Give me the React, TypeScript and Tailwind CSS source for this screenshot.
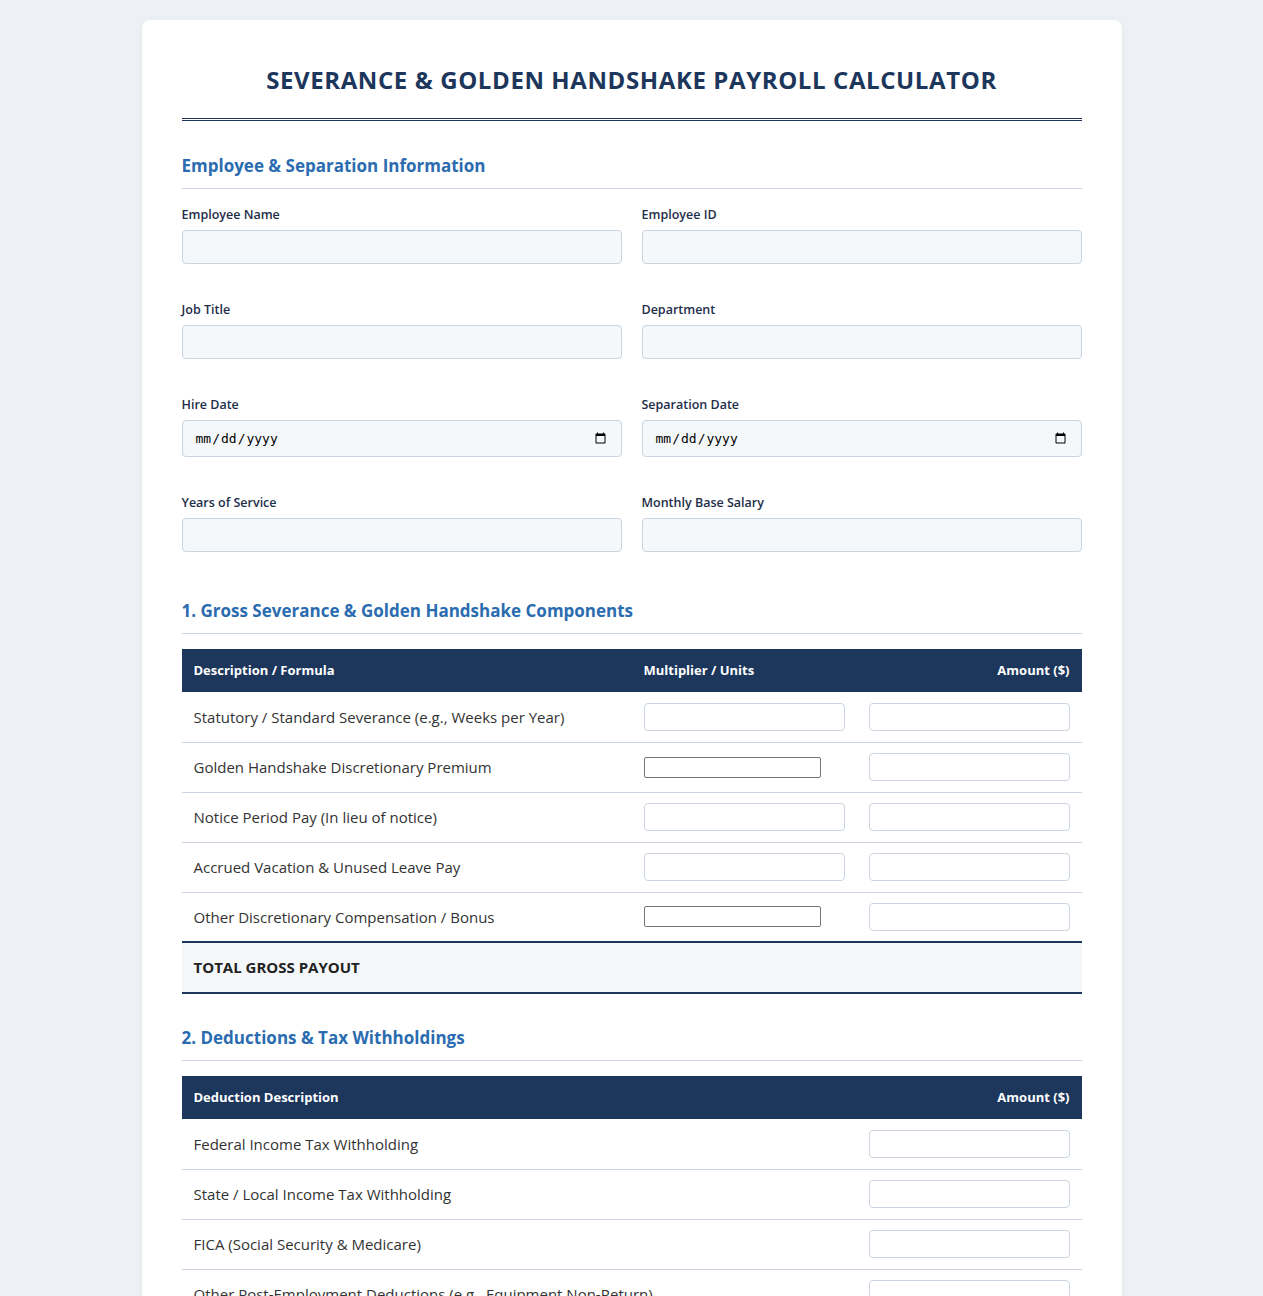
import React from "react";

const infoFields = [
  { label: "Employee Name", type: "text" },
  { label: "Employee ID", type: "text" },
  { label: "Job Title", type: "text" },
  { label: "Department", type: "text" },
  { label: "Hire Date", type: "date" },
  { label: "Separation Date", type: "date" },
  { label: "Years of Service", type: "text" },
  { label: "Monthly Base Salary", type: "text" },
];

const grossRows = [
  { label: "Statutory / Standard Severance (e.g., Weeks per Year)", plain: false },
  { label: "Golden Handshake Discretionary Premium", plain: true },
  { label: "Notice Period Pay (In lieu of notice)", plain: false },
  { label: "Accrued Vacation & Unused Leave Pay", plain: false },
  { label: "Other Discretionary Compensation / Bonus", plain: true },
];

const deductionRows = [
  "Federal Income Tax Withholding",
  "State / Local Income Tax Withholding",
  "FICA (Social Security & Medicare)",
  "Other Post-Employment Deductions (e.g., Equipment Non-Return)",
];

function SectionTitle({ children }: { children: React.ReactNode }) {
  return (
    <h2 className="text-[17px] leading-[27px] font-bold text-[#2b6cb0] pb-[9px] border-b border-[#cbd5e0]">
      {children}
    </h2>
  );
}

function CellInput() {
  return (
    <input
      type="text"
      className="block w-full h-[28px] bg-white border border-[#cbd5e0] rounded-[4px] px-2 text-[14px] outline-none"
    />
  );
}

function PlainInput() {
  return (
    <input
      type="text"
      className="block w-[177px] h-[21px] bg-white border border-[#767676] rounded-[2px] px-[2px] text-[13px]"
    />
  );
}

export default function App() {
  return (
    <div
      className="min-h-screen bg-[#edf1f5] pt-[20px] pb-[20px]"
      style={{ fontFamily: '"Open Sans", "Noto Sans", sans-serif' }}
    >
      <div className="w-[980px] mx-auto bg-white rounded-[8px] p-[40px] shadow-[0_2px_10px_rgba(0,0,0,0.05)]">
        <h1 className="text-center text-[24px] leading-[40px] font-bold tracking-[0.6px] uppercase text-[#1c365c] pb-[18px] border-b-[3px] border-double border-[#1c365c]">
          Severance &amp; Golden Handshake Payroll Calculator
        </h1>

        {/* employee info */}
        <div className="mt-[31px]">
          <SectionTitle>Employee &amp; Separation Information</SectionTitle>
          <div className="grid grid-cols-2 gap-x-[20px] gap-y-[37px] mt-[17px]">
            {infoFields.map((f) => (
              <div key={f.label} className="flex flex-col">
                <label className="text-[12.5px] leading-[18px] font-semibold text-[#1e2e4a] mb-[6px]">
                  {f.label}
                </label>
                {f.type === "date" ? (
                  <input
                    type="date"
                    className="w-full h-[37px] bg-[#f5f8fb] border border-[#cbd5e0] rounded-[4px] px-[12px] text-[13px] text-black"
                    style={{ fontFamily: '"DejaVu Sans Mono", monospace' }}
                  />
                ) : (
                  <input
                    type="text"
                    className="w-full h-[34px] bg-[#f5f8fb] border border-[#cbd5e0] rounded-[4px] px-[12px] text-[14px]"
                  />
                )}
              </div>
            ))}
          </div>
        </div>

        {/* gross */}
        <div className="mt-[45px]">
          <SectionTitle>1. Gross Severance &amp; Golden Handshake Components</SectionTitle>
          <table className="w-full mt-[15px] border-collapse table-fixed">
            <thead>
              <tr className="bg-[#1c365c] text-white text-[13px] font-bold">
                <th className="w-[50%] h-[43px] text-left px-[12px]">Description / Formula</th>
                <th className="w-[25%] text-left px-[12px]">Multiplier / Units</th>
                <th className="w-[25%] text-right px-[12px]">Amount ($)</th>
              </tr>
            </thead>
            <tbody>
              {grossRows.map((r) => (
                <tr key={r.label} className="border-b border-[#cbd5e0] text-[15px] text-[#333]">
                  <td className="h-[50px] px-[12px]">{r.label}</td>
                  <td className="px-[12px]">{r.plain ? <PlainInput /> : <CellInput />}</td>
                  <td className="px-[12px]">
                    <CellInput />
                  </td>
                </tr>
              ))}
              <tr className="bg-[#f5f8fb] border-t-2 border-b-2 border-[#1c365c]">
                <td colSpan={3} className="h-[51px] px-[12px] text-[15px] font-bold text-[#222]">
                  TOTAL GROSS PAYOUT
                </td>
              </tr>
            </tbody>
          </table>
        </div>

        {/* deductions */}
        <div className="mt-[30px]">
          <SectionTitle>2. Deductions &amp; Tax Withholdings</SectionTitle>
          <table className="w-full mt-[15px] border-collapse table-fixed">
            <thead>
              <tr className="bg-[#1c365c] text-white text-[13px] font-bold">
                <th className="w-[75%] h-[43px] text-left px-[12px]">Deduction Description</th>
                <th className="w-[25%] text-right px-[12px]">Amount ($)</th>
              </tr>
            </thead>
            <tbody>
              {deductionRows.map((d) => (
                <tr key={d} className="border-b border-[#cbd5e0] text-[15px] text-[#333]">
                  <td className="h-[50px] px-[12px]">{d}</td>
                  <td className="px-[12px]">
                    <CellInput />
                  </td>
                </tr>
              ))}
            </tbody>
          </table>
        </div>
      </div>
    </div>
  );
}
